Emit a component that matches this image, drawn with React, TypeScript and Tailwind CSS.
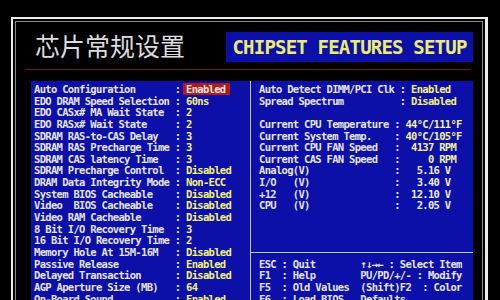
import React from 'react';

const mono = "font-['DejaVu_Sans_Mono','Liberation_Mono',monospace] font-bold text-[10.5px] tracking-[-0.69px] whitespace-pre";

const leftRows: [string, string][] = [
  ['Auto Configuration', 'Enabled'],
  ['EDO DRAM Speed Selection', '60ns'],
  ['EDO CASx# MA Wait State', '2'],
  ['EDO RASx# Wait State', '2'],
  ['SDRAM RAS-to-CAS Delay', '3'],
  ['SDRAM RAS Precharge Time', '3'],
  ['SDRAM CAS latency Time', '3'],
  ['SDRAM Precharge Control', 'Disabled'],
  ['DRAM Data Integrity Mode', 'Non-ECC'],
  ['System BIOS Cacheable', 'Disabled'],
  ['Video  BIOS Cacheable', 'Disabled'],
  ['Video RAM Cacheable', 'Disabled'],
  ['8 Bit I/O Recovery Time', '3'],
  ['16 Bit I/O Recovery Time', '2'],
  ['Memory Hole At 15M-16M', 'Disabled'],
  ['Passive Release', 'Enabled'],
  ['Delayed Transaction', 'Disabled'],
  ['AGP Aperture Size (MB)', '64'],
  ['On-Board Sound', 'Enabled'],
];

// prefix already holds the colon and its spacing; tone picks the value colour
const rightRows: [string, string, 'y' | 'p' | 'w'][] = [
  ['Auto Detect DIMM/PCI Clk : ', 'Enabled', 'y'],
  ['Spread Spectrum          : ', 'Disabled', 'y'],
  ['', '', 'w'],
  ['Current CPU Temperature : ', '44°C/111°F', 'p'],
  ['Current System Temp.    : ', '40°C/105°F', 'p'],
  ['Current CPU FAN Speed   :  ', '4137 RPM', 'p'],
  ['Current CAS FAN Speed   :  ', '   0 RPM', 'p'],
  ['Analog(V)               :  ', ' 5.16 V', 'w'],
  ['I/O   (V)               :  ', ' 3.40 V', 'w'],
  ['+12   (V)               :  ', '12.10 V', 'w'],
  ['CPU   (V)               :  ', ' 2.05 V', 'w'],
];

const helpRows = [
  'ESC : Quit        ↑↓→← : Select Item',
  'F1  : Help        PU/PD/+/- : Modify',
  'F5  : Old Values  (Shift)F2  : Color',
  'F6  : Load BIOS   Defaults',
];

const toneClass = { y: 'text-[#f4f27a]', p: 'text-[#f2f0a6]', w: 'text-[#ececec]' };

export default function App() {
  return (
    <div className="w-[500px] h-[300px] bg-black overflow-hidden pl-[11px] pt-[17px]">
      <div className="w-[477px] h-[400px] border-2 border-r-[3px] border-[#ececec] p-[2px]">
        <div className="h-full border border-[#8a8a8a]">
          {/* header */}
          <div className="flex items-start justify-between pt-[10px] pl-[19px] pr-[9px]">
            <div className="font-['Noto_Sans_CJK_SC',sans-serif] text-[25px] leading-[26px] text-[#dcdcdc]">
              芯片常规设置
            </div>
            <div className="w-[247px] h-[30px] bg-[#0c10a8] flex items-center justify-center">
              <span className="font-['DejaVu_Sans_Mono','Liberation_Mono',monospace] font-bold text-[19px] tracking-[-0.8px] text-[#ecec6e] whitespace-pre">
                CHIPSET FEATURES SETUP
              </span>
            </div>
          </div>

          <div className="mt-[7px] ml-[9px] w-[446px] h-px bg-[#701414]" />

          {/* main panel */}
          <div className="mt-[11px] ml-[15px] w-[442px] h-[300px] bg-[#0c10a8] flex">
            <div className="w-[219px] pl-[3px] pt-[3px]">
              {leftRows.map(([label, value], i) => (
                <div key={label} className={`${mono} h-[11.65px] leading-[11.65px] text-[#e4e4e4]`}>
                  {label.padEnd(25) + ': '}
                  {i === 0 ? (
                    <span className="-ml-[3px] pl-[3px] pr-[5px] bg-[#b01a1a] text-[#f2e6e0]">{value}</span>
                  ) : (
                    <span className="text-[#f4f27a]">{value}</span>
                  )}
                </div>
              ))}
            </div>

            <div className="flex-1 border-l border-[#c4c4d4] pt-[3px]">
              <div className="pl-[8px]">
                {rightRows.map(([prefix, value, tone], i) => (
                  <div key={i} className={`${mono} h-[11.65px] leading-[11.65px] text-[#e4e4e4]`}>
                    {prefix}
                    <span className={toneClass[tone]}>{value}</span>
                  </div>
                ))}
              </div>
              <div className="mt-[39.8px] border-t border-[#c4c4d4] pl-[8px] pt-[6px]">
                {helpRows.map(row => (
                  <div key={row} className={`${mono} h-[11.6px] leading-[11.6px] text-[#e4e4e4]`}>
                    {row}
                  </div>
                ))}
              </div>
            </div>
          </div>
        </div>
      </div>
    </div>
  );
}
